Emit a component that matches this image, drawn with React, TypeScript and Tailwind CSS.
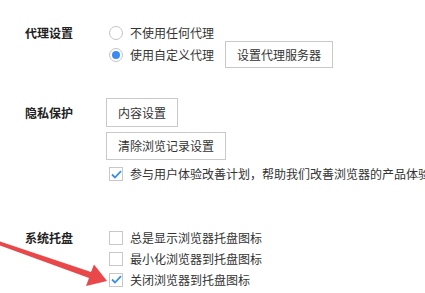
import React from "react";

const font = { fontFamily: '"Microsoft YaHei", "Noto Sans CJK SC", "Noto Sans", sans-serif' };

function Radio({ checked }: { checked?: boolean }) {
  return (
    <span className="flex h-[14px] w-[14px] shrink-0 items-center justify-center rounded-full border border-[#c4c4c4] bg-white">
      {checked && <span className="h-[8px] w-[8px] rounded-full bg-[#3b8cf2]" />}
    </span>
  );
}

function Check({ checked }: { checked?: boolean }) {
  return (
    <span className="flex h-[14px] w-[14px] shrink-0 items-center justify-center border border-[#c8c8c8] bg-white">
      {checked && (
        <svg width="11" height="9" viewBox="0 0 11 9">
          <path d="M1 4.5 L4 7.5 L10 1.2" fill="none" stroke="#3a8ee8" strokeWidth="1.8" />
        </svg>
      )}
    </span>
  );
}

function Btn({ children, h }: { children: React.ReactNode; h: string }) {
  return (
    <div className={`flex ${h} items-center border border-[#c9c9c9] bg-white px-[11px] text-[12px] text-[#333]`}>
      {children}
    </div>
  );
}

export default function App() {
  return (
    <div className="relative h-[293px] w-[425px] overflow-hidden bg-white text-[12px] text-[#333]" style={font}>
      <div className="flex flex-col pt-[25px]">
        {/* Proxy */}
        <div className="flex">
          <div className="h-[16px] w-[106px] shrink-0 pl-[25px] text-[12px] font-bold leading-[16px] text-[#222]">代理设置</div>
          <div className="flex flex-col pl-[3px]">
            <div className="flex h-[16px] items-center gap-[7px]">
              <Radio />
              <span className="whitespace-nowrap leading-[16px]">不使用任何代理</span>
            </div>
            <div className="flex h-[27px] items-center">
              <Radio checked />
              <span className="ml-[7px] whitespace-nowrap">使用自定义代理</span>
              <div className="ml-[11px]">
                <Btn h="h-[27px]">设置代理服务器</Btn>
              </div>
            </div>
          </div>
        </div>

        {/* Privacy */}
        <div className="mt-[30px] flex">
          <div className="flex h-[29px] w-[106px] shrink-0 items-center pl-[25px] font-bold text-[#222]">隐私保护</div>
          <div className="flex flex-col">
            <div className="flex">
              <Btn h="h-[29px]">内容设置</Btn>
            </div>
            <div className="mt-[5px] flex">
              <Btn h="h-[28px]">清除浏览记录设置</Btn>
            </div>
            <div className="mt-[6px] flex h-[16px] items-center pl-[3px]">
              <Check checked />
              <span className="ml-[7px] whitespace-nowrap">参与用户体验改善计划，帮助我们改善浏览器的产品体验</span>
            </div>
          </div>
        </div>

        {/* Tray */}
        <div className="mt-[45px] flex">
          <div className="flex h-[21px] w-[106px] shrink-0 items-center pl-[25px] font-bold text-[#222]">系统托盘</div>
          <div className="flex flex-col">
            <div className="flex h-[21px] items-center pl-[3px]">
              <Check />
              <span className="ml-[7px] whitespace-nowrap">总是显示浏览器托盘图标</span>
            </div>
            <div className="flex h-[21px] items-center pl-[3px]">
              <Check />
              <span className="ml-[7px] whitespace-nowrap">最小化浏览器到托盘图标</span>
            </div>
            <div className="flex h-[21px] items-center pl-[3px]">
              <Check checked />
              <span className="ml-[7px] whitespace-nowrap">关闭浏览器到托盘图标</span>
            </div>
          </div>
        </div>
      </div>

      <svg className="pointer-events-none absolute left-0 top-0" width="425" height="293" viewBox="0 0 425 293">
        <polygon
          points="0,241.5 91,272 94,264.5 107,281 86,286 89,278 0,245.5"
          fill="#e8484a"
        />
      </svg>
    </div>
  );
}
